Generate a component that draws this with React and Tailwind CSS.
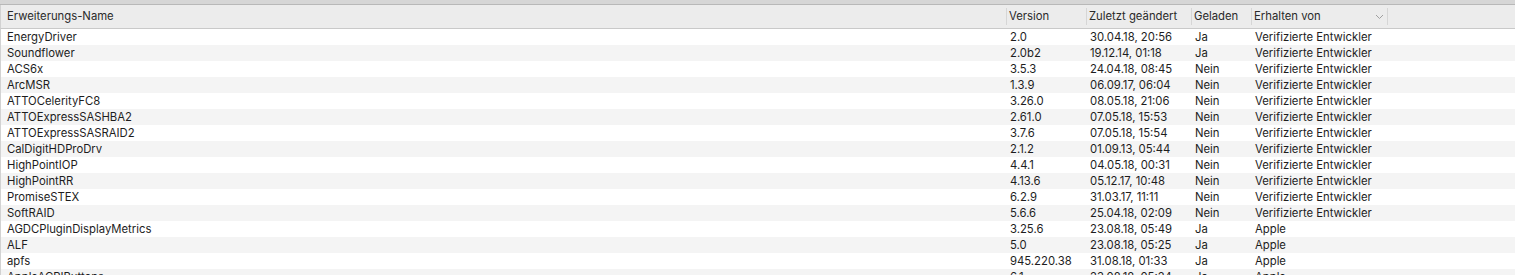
import React from 'react';

const columns = [
  { key: 'name', label: 'Erweiterungs-Name', width: 'w-[1006px]' },
  { key: 'version', label: 'Version', width: 'w-[80px]' },
  { key: 'date', label: 'Zuletzt geändert', width: 'w-[105px]' },
  { key: 'loaded', label: 'Geladen', width: 'w-[60px]' },
  { key: 'source', label: 'Erhalten von', width: 'w-[136px]', sort: true },
];

const VE = 'Verifizierte Entwickler';

const rows = [
  ['EnergyDriver', '2.0', '30.04.18, 20:56', 'Ja', VE],
  ['Soundflower', '2.0b2', '19.12.14, 01:18', 'Ja', VE],
  ['ACS6x', '3.5.3', '24.04.18, 08:45', 'Nein', VE],
  ['ArcMSR', '1.3.9', '06.09.17, 06:04', 'Nein', VE],
  ['ATTOCelerityFC8', '3.26.0', '08.05.18, 21:06', 'Nein', VE],
  ['ATTOExpressSASHBA2', '2.61.0', '07.05.18, 15:53', 'Nein', VE],
  ['ATTOExpressSASRAID2', '3.7.6', '07.05.18, 15:54', 'Nein', VE],
  ['CalDigitHDProDrv', '2.1.2', '01.09.13, 05:44', 'Nein', VE],
  ['HighPointIOP', '4.4.1', '04.05.18, 00:31', 'Nein', VE],
  ['HighPointRR', '4.13.6', '05.12.17, 10:48', 'Nein', VE],
  ['PromiseSTEX', '6.2.9', '31.03.17, 11:11', 'Nein', VE],
  ['SoftRAID', '5.6.6', '25.04.18, 02:09', 'Nein', VE],
  ['AGDCPluginDisplayMetrics', '3.25.6', '23.08.18, 05:49', 'Ja', 'Apple'],
  ['ALF', '5.0', '23.08.18, 05:25', 'Ja', 'Apple'],
  ['apfs', '945.220.38', '31.08.18, 01:33', 'Ja', 'Apple'],
  ['AppleACPIButtons', '6.1', '23.08.18, 05:24', 'Ja', 'Apple'],
];

const Chevron = () => (
  <svg width="9" height="6" viewBox="0 0 9 6" className="mr-[3px]">
    <path d="M1 1 L4.5 4.5 L8 1" fill="none" stroke="#a0a0a0" strokeWidth="1" />
  </svg>
);

export default function App() {
  return (
    <div
      className="w-[1515px] h-[275px] overflow-hidden bg-white text-[11.3px] text-[#1d1d1d]"
      style={{ fontFamily: 'Inter, "Liberation Sans", sans-serif' }}
    >
      <div className="h-[4px] bg-[#d6d6d6] border-b border-[#b8b8b8] box-content" />
      <div className="flex h-[23px] bg-[#ececec] border-b border-[#c9c9c9] border-l border-l-[#d2d2d2] box-content">
        {columns.map((col, i) => (
          <div key={col.key} className={`${col.width} flex items-center shrink-0 ${i === 0 ? 'pl-[6px]' : 'pl-[2px]'}`}>
            <span className="flex-1 text-[#2a2a2a]">{col.label}</span>
            {col.sort && <Chevron />}
            <div className="h-[17px] w-px bg-[#d6d6d6]" />
          </div>
        ))}
        <div className="flex-1" />
      </div>
      <div className="border-l border-[#d2d2d2]">
        {rows.map((r, idx) => (
          <div key={idx} className={`flex h-[16px] items-center ${idx % 2 === 1 ? 'bg-[#f4f4f4]' : 'bg-white'}`}>
            {r.map((cell, i) => (
              <div key={i} className={`${columns[i].width} shrink-0 whitespace-nowrap ${i === 0 ? 'pl-[6px]' : 'pl-[3px]'}`}>
                {cell}
              </div>
            ))}
          </div>
        ))}
      </div>
    </div>
  );
}
